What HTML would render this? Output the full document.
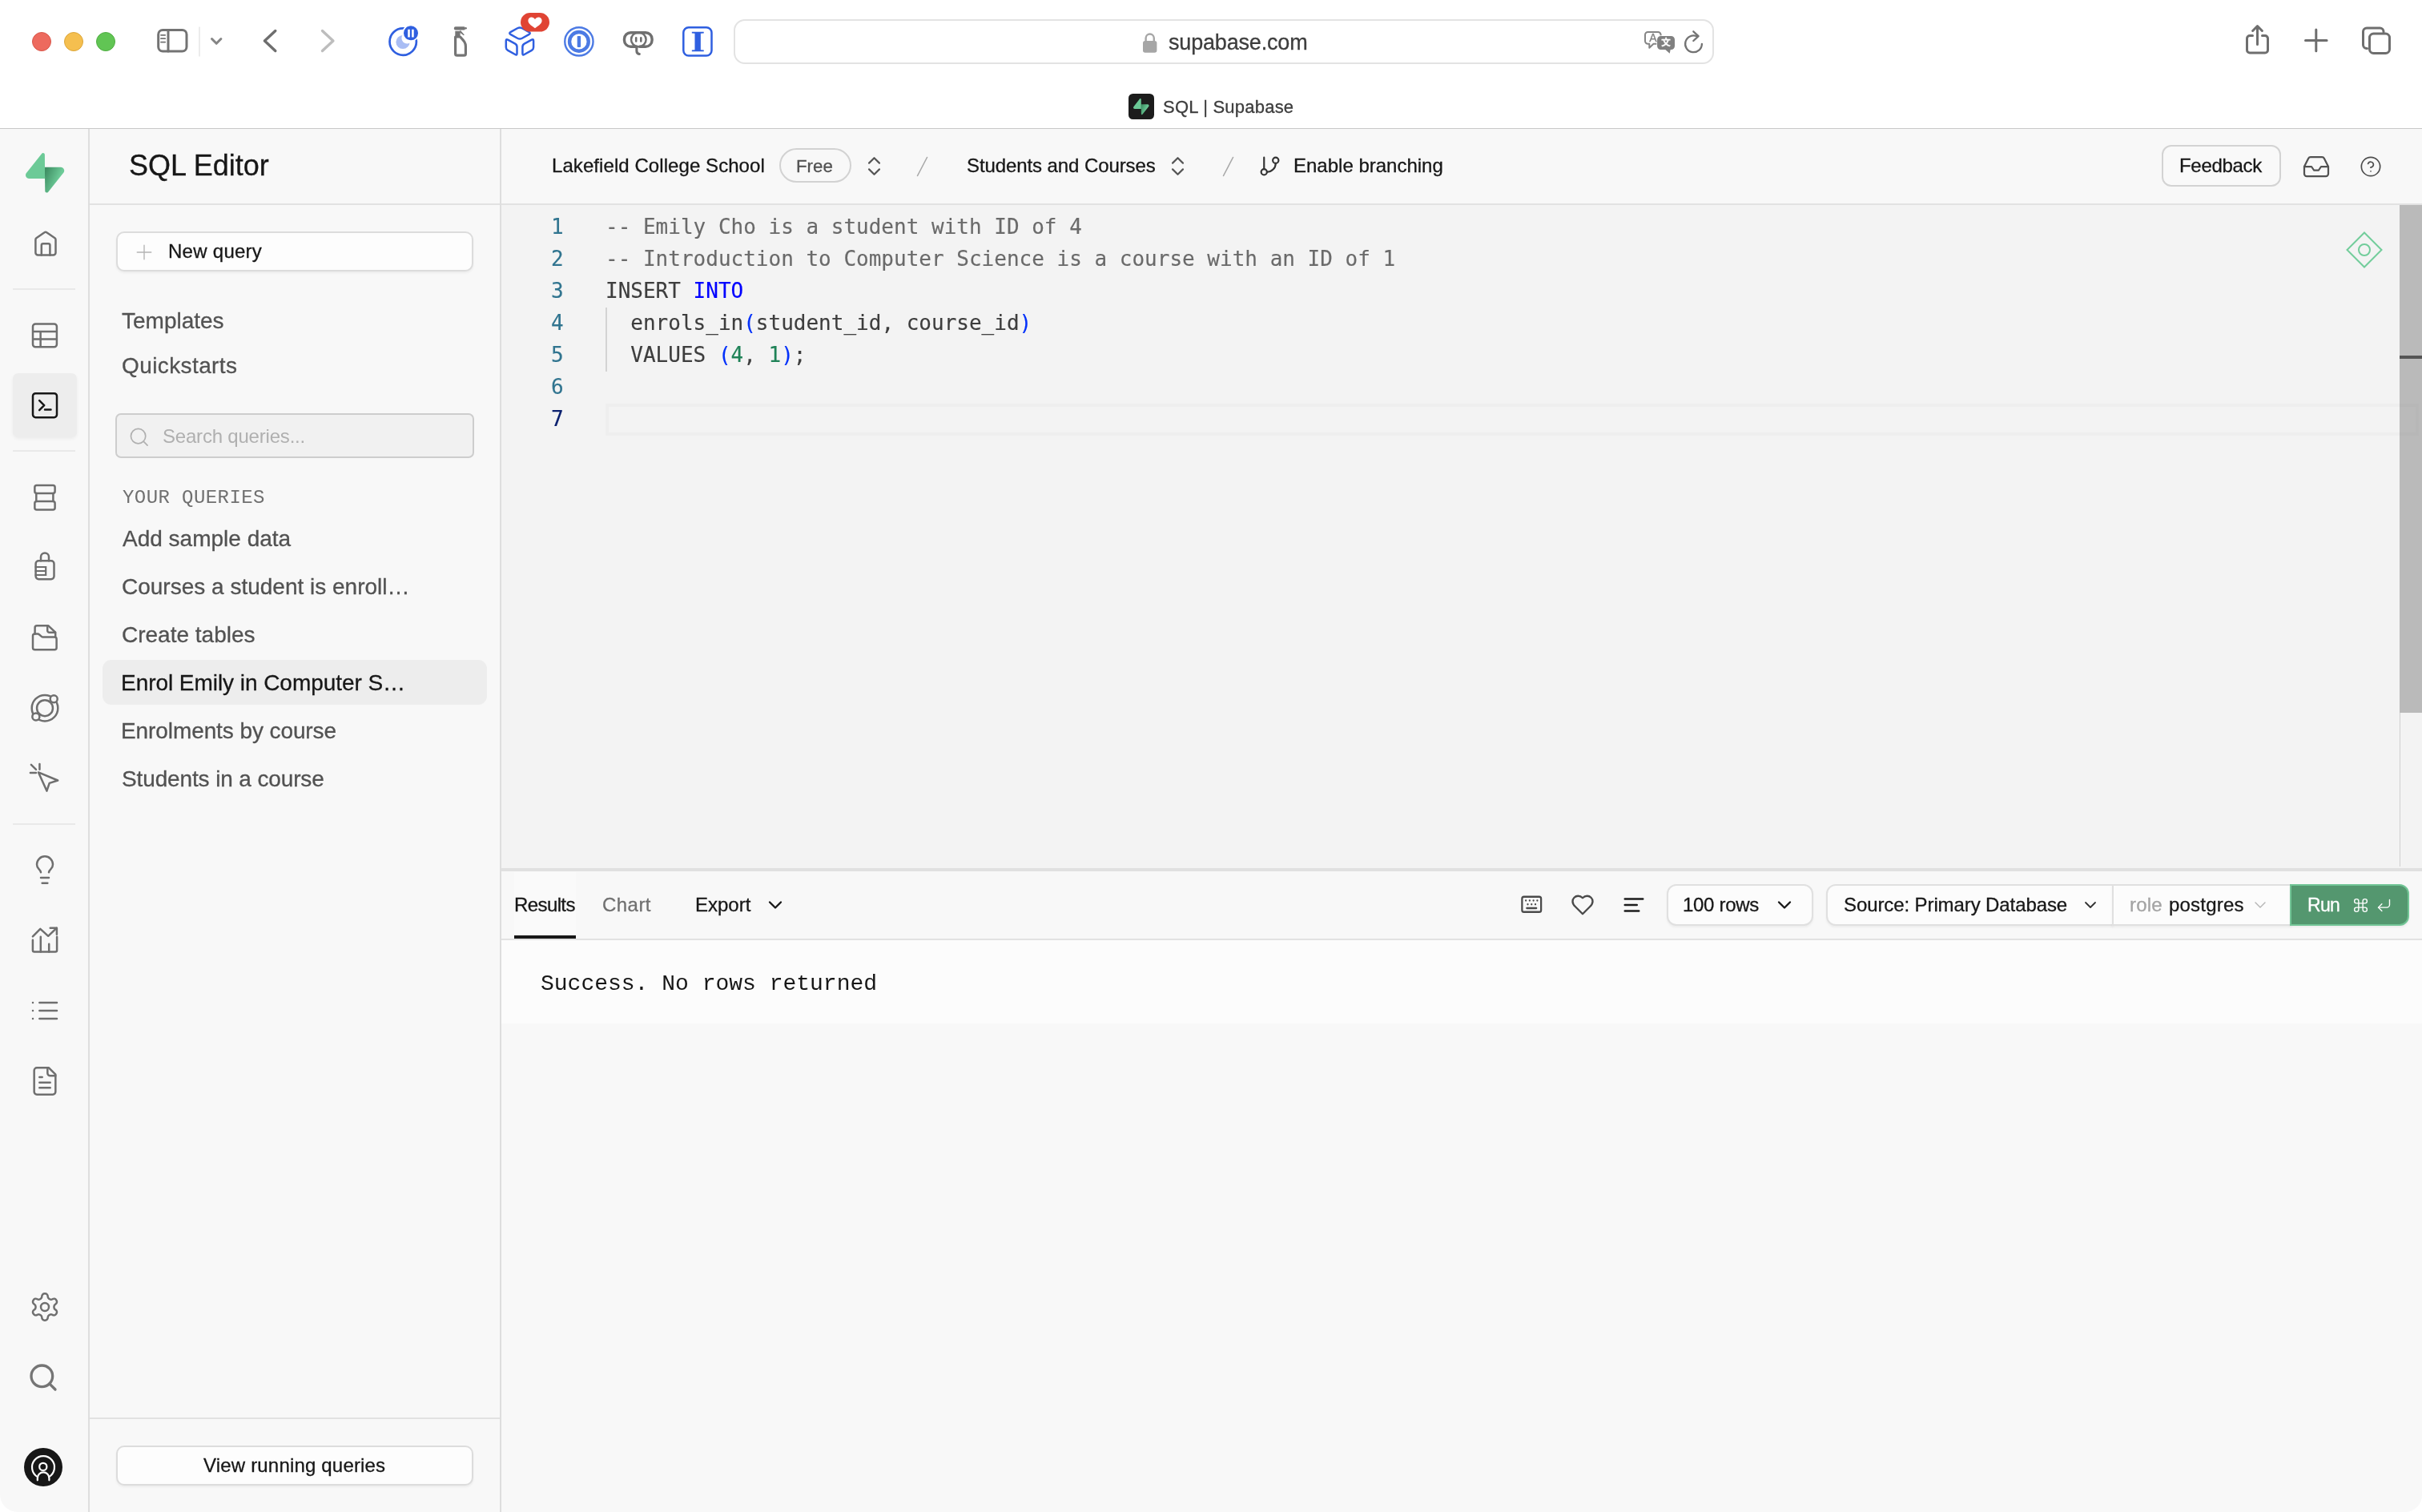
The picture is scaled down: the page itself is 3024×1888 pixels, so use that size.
<!DOCTYPE html>
<html lang="en">
<head>
<meta charset="utf-8">
<title>SQL | Supabase</title>
<style>
*{box-sizing:border-box;margin:0;padding:0}
html,body{width:3024px;height:1888px;overflow:hidden;background:#fff}
body{position:relative;font-family:"Liberation Sans",sans-serif;color:#171717}
.abs{position:absolute}
.t{position:absolute;white-space:pre;font-family:"Liberation Sans",sans-serif;will-change:transform}
.t{-webkit-text-stroke:.300px}
.mono{-webkit-text-stroke:.150px}
.lmono{-webkit-text-stroke:0}
.mono{font-family:"DejaVu Sans Mono","Liberation Mono",monospace}
.lmono{font-family:"Liberation Mono","DejaVu Sans Mono",monospace}
svg{position:absolute;overflow:visible}
</style>
</head>
<body>
<!-- ===== BROWSER CHROME ===== -->
<div class="abs" style="left:0px;top:0px;width:3024px;height:160px;background:#fff"></div>
<div class="abs" style="left:0px;top:160px;width:3024px;height:1px;background:#c8c8c8"></div>
<div class="abs" style="left:40px;top:40px;width:24px;height:24px;border-radius:50%;background:#ed6a5e;border:1px solid #d9574b"></div>
<div class="abs" style="left:80px;top:40px;width:24px;height:24px;border-radius:50%;background:#f5bf4f;border:1px solid #dca63a"></div>
<div class="abs" style="left:120px;top:40px;width:24px;height:24px;border-radius:50%;background:#61c554;border:1px solid #4fae42"></div>
<svg style="left:0;top:0" width="3024" height="160" viewBox="0 0 3024 160" fill="none" stroke-linecap="round" stroke-linejoin="round">
<g stroke="#737373" stroke-width="3"><rect x="197.7" y="37.5" width="35.3" height="26.6" rx="5.5"/><path d="M210 37.5v26.6"/></g>
<g stroke="#737373" stroke-width="1.8"><path d="M201 43.8h5.2M201 48.2h5.2M201 52.6h5.2"/></g>
<path d="M249 34v36" stroke="#e6e6e6" stroke-width="1.5"/>
<path d="M264.5 48.5l5.7 5.8 5.7-5.8" stroke="#858585" stroke-width="3"/>
<path d="M343.8 38.5L330.4 51l13.4 12.5" stroke="#6e6e6e" stroke-width="3.4"/>
<path d="M402.5 38.5L415.9 51l-13.4 12.5" stroke="#bdbdbd" stroke-width="3.4"/>
<circle cx="503.200" cy="52.100" r="16.700" stroke="#2f5fe0" stroke-width="2.700"/>
<circle cx="503" cy="52.500" r="8.600" fill="#a9bdf4" stroke="none"/><circle cx="508.300" cy="47.700" r="6.900" fill="#fff" stroke="none"/>
<circle cx="513" cy="41.300" r="10.700" fill="#fff" stroke="none"/><circle cx="513" cy="41.300" r="9" fill="#2f5fe0" stroke="none"/>
<path d="M510.500 36.800v9.800M515.400 36.800v9.800" stroke="#fff" stroke-width="2.600" stroke-linecap="butt"/>
<g fill="#757575" stroke="none"><path d="M568.800 33.200h10.500a1.500 1.500 0 0 1 1.500 1.500v1.400a1.500 1.500 0 0 1-1.500 1.500h-10.500a2 2 0 0 1-2-2v-.400a2 2 0 0 1 2-2z"/><circle cx="581.600" cy="35.200" r="1.300"/><rect x="568.300" y="38.800" width="6.300" height="7.400"/><path d="M574.600 37.600l5.200 5.800-.900.800-5-3.600z"/></g>
<path d="M568.600 46v21.200a2 2 0 0 0 2 2h8.800a2 2 0 0 0 2-2v-9.400c0-4.600-2.200-6.800-6.800-11.800z" stroke="#757575" stroke-width="3.200"/>
<g stroke="#2f5fe0" stroke-width="2.500"><path d="M646.03 35.25Q649.00 33.60 651.97 35.25L660.23 39.85Q663.20 41.50 660.23 43.15L651.97 47.75Q649.00 49.40 646.03 47.75L637.77 43.15Q634.80 41.50 637.77 39.85Z"/><path d="M631.80 50.90Q631.80 48.30 634.08 49.55L643.22 54.55Q645.50 55.80 645.50 58.40L645.50 66.70Q645.50 69.30 643.24 68.01L634.06 62.79Q631.80 61.50 631.80 58.90Z"/><path d="M652.40 58.40Q652.40 55.80 654.68 54.55L663.82 49.55Q666.10 48.30 666.10 50.90L666.10 58.90Q666.10 61.50 663.84 62.79L654.66 68.01Q652.40 69.30 652.40 66.70Z"/></g>
<rect x="650" y="16" width="36" height="23.6" rx="11.8" fill="#e04434" stroke="none"/>
<path d="M668 35.2c-5.6-3.6-8.6-6.3-8.6-9.4 0-2.5 1.9-4.2 4.2-4.2 1.8 0 3.4 1 4.4 2.6 1-1.6 2.6-2.6 4.4-2.6 2.300 0 4.200 1.700 4.200 4.200 0 3.100-3 5.800-8.600 9.400z" fill="#fff" stroke="none"/>
<circle cx="722.900" cy="51.900" r="17.650" stroke="#4c7ae4" stroke-width="2.400"/><circle cx="722.900" cy="51.900" r="11.850" stroke="#4c7ae4" stroke-width="4.400"/>
<rect x="720.700" y="44.900" width="4.400" height="14" rx=".800" fill="#4c7ae4" stroke="none"/>
<g stroke="#6f6f6f" stroke-width="3.400"><path d="M794.900 58.200h-7.400a8 8 0 0 1-8-8v-1.500a8 8 0 0 1 8-8h18.600a8 8 0 0 1 8 8v1.500a8 8 0 0 1-8 8h-7.400"/><ellipse cx="797.300" cy="49.450" rx="9.300" ry="8.900" stroke-width="2.500"/><path d="M794.900 58.200v5.200a4.200 4.200 0 0 0 3.400 4.100" stroke-width="3.100"/></g>
<path d="M794.200 47.300v4.200M800.300 47.300v4.200" stroke="#6f6f6f" stroke-width="2.600"/>
<rect x="853.300" y="34.300" width="35.200" height="35.200" rx="6.500" stroke="#2f5fe0" stroke-width="2.500"/>
<rect x="1427" y="51" width="17.400" height="14.800" rx="2.800" fill="#a6a6a6" stroke="none"/><path d="M1430.600 52v-4.400a5.100 5.100 0 0 1 10.200 0V52" stroke="#a6a6a6" stroke-width="2.400"/>
<path d="M2057.500 40h12.600a3.500 3.500 0 0 1 3.500 3.500v7.700a3.500 3.500 0 0 1-3.500 3.500h-5.600l-5.200 5v-5h-1.800a3.500 3.500 0 0 1-3.500-3.500v-7.700a3.500 3.500 0 0 1 3.500-3.500z" stroke="#858585" stroke-width="2" fill="#fff"/>
<path d="M2073.600 45h12.900a4.500 4.500 0 0 1 4.500 4.500v8.100a4.500 4.500 0 0 1-4.500 4.500h-.800l-1 4.700-5.400-4.700h-5.700a4.500 4.500 0 0 1-4.500-4.500v-8.100a4.500 4.500 0 0 1 4.500-4.500z" fill="#808080" stroke="#fff" stroke-width="1.500" paint-order="stroke"/>
<path d="M2124.900 54.800a10.400 10.400 0 1 1-6.300-9.550" stroke="#737373" stroke-width="2.300"/><path d="M2114.300 39.300l6.300 5.800-6.300 5.900" stroke="#737373" stroke-width="2.300"/>
<g stroke="#6e6e6e" stroke-width="3"><path d="M2812.500 44.600h-3.500a3.500 3.500 0 0 0-3.500 3.500v14.400a3.500 3.500 0 0 0 3.500 3.500h19a3.500 3.500 0 0 0 3.500-3.500v-14.400a3.500 3.500 0 0 0-3.500-3.500h-3.500"/><path d="M2818.500 55.500v-22.500M2812.600 38.500l5.900-5.900 5.900 5.900"/></g>
<path d="M2878.500 50.400h26.600M2891.800 37.100v26.600" stroke="#6e6e6e" stroke-width="3"/>
<g stroke="#6e6e6e" stroke-width="3"><rect x="2958.500" y="42" width="25" height="24.500" rx="5"/><path d="M2955.500 60.500h-.500a4.500 4.500 0 0 1-4.500-4.500v-16.500a4.500 4.500 0 0 1 4.500-4.500h16.500a4.500 4.500 0 0 1 4.500 4.500v.500" /></g>
</svg>
<div class="t" style="left:853.6px;top:33px;width:34.600px;text-align:center;font-family:'Liberation Serif',serif;font-weight:bold;font-size:36px;line-height:38px;color:#2f5fe0;transform:scaleX(1.250)">I</div>
<div class="t" style="left:2054.800px;top:40.400px;width:18px;text-align:center;font-size:14px;line-height:14px;color:#808080">A</div>
<div class="t" style="left:2070.900px;top:47.300px;width:18px;text-align:center;font-family:'Liberation Sans','Noto Sans CJK SC',sans-serif;font-size:11.500px;line-height:13px;color:#fff;font-weight:bold">文</div>
<div class="abs" style="left:916px;top:24px;width:1224px;height:56px;border:2px solid #e3e3e3;border-radius:14px"></div>
<div class="t" style="left:1459.3px;top:40.0px;font-size:27px;line-height:27px;color:#3d3d3d;letter-spacing:-0.18px;">supabase.com</div>
<div class="abs" style="left:1409px;top:117px;width:32px;height:32px;background:#1c1c1c;border-radius:5.500px"></div>
<svg style="left:1415.200px;top:122.700px" width="19.600" height="20.300" viewBox="0 0 109 113"><defs><linearGradient id="fg" x1="53.974" y1="54.974" x2="94.164" y2="71.830" gradientUnits="userSpaceOnUse"><stop stop-color="#3d8f63"/><stop offset="1" stop-color="#6bc996"/></linearGradient></defs><path d="M63.7076 110.284C60.8481 113.885 55.0502 111.912 54.9813 107.314L53.9738 40.0627L99.1935 40.0627C107.384 40.0627 111.952 49.5228 106.859 55.9374L63.7076 110.284Z" fill="url(#fg)"/><path d="M45.317 2.07103C48.1765 -1.53037 53.9745 0.442937 54.0434 5.041L54.4849 72.2922H9.83113C1.64038 72.2922 -2.92775 62.8321 2.1655 56.4175L45.317 2.07103Z" fill="#6bc996"/></svg>
<div class="t" style="left:1451.8px;top:123.0px;font-size:22px;line-height:22px;color:#3d3d3d;letter-spacing:0.22px;">SQL | Supabase</div>
<!-- ===== NAV RAIL ===== -->
<div class="abs" style="left:0px;top:161px;width:112px;height:1727px;background:#f8f8f8;border-bottom-left-radius:22px"></div>
<div class="abs" style="left:110px;top:161px;width:2px;height:1727px;background:#dedede"></div>
<svg style="left:31.900px;top:190.600px" width="48.200" height="50" viewBox="0 0 109 113"><defs><linearGradient id="lg" x1="53.974" y1="54.974" x2="94.164" y2="71.830" gradientUnits="userSpaceOnUse"><stop stop-color="#3e8e63"/><stop offset="1" stop-color="#6cca97"/></linearGradient></defs><path d="M63.7076 110.284C60.8481 113.885 55.0502 111.912 54.9813 107.314L53.9738 40.0627L99.1935 40.0627C107.384 40.0627 111.952 49.5228 106.859 55.9374L63.7076 110.284Z" fill="url(#lg)"/><path d="M45.317 2.07103C48.1765 -1.53037 53.9745 0.442937 54.0434 5.041L54.4849 72.2922H9.83113C1.64038 72.2922 -2.92775 62.8321 2.1655 56.4175L45.317 2.07103Z" fill="#6cca97"/></svg>
<div class="abs" style="left:16px;top:359.6px;width:78px;height:2px;background:#e9e9e9"></div>
<div class="abs" style="left:16px;top:562px;width:78px;height:2px;background:#e9e9e9"></div>
<div class="abs" style="left:16px;top:1027.8px;width:78px;height:2px;background:#e9e9e9"></div>
<div class="abs" style="left:16px;top:466.3px;width:80px;height:80px;background:#ededed;border-radius:7px;box-shadow:0 2px 4px rgba(0,0,0,.050)"></div>
<svg style="left:0;top:0" width="112" height="1888" viewBox="0 0 112 1888" fill="none" stroke="#6f6f6f" stroke-width="2.500" stroke-linecap="round" stroke-linejoin="round">
<path d="M44.400 299.300a2.500 2.500 0 0 1 1-2L55.500 290.300a2.300 2.300 0 0 1 2.800 0L68.500 297.300a2.500 2.500 0 0 1 1 2V315.600a3 3 0 0 1-3 3H47.400a3 3 0 0 1-3-3Z"/><path d="M51.800 318.600V306.300a2 2 0 0 1 2-2h6.600a2 2 0 0 1 2 2V318.600"/>
<rect x="43.350" y="606.100" width="25.250" height="9.900" rx="2.500"/><rect x="43.350" y="626.100" width="25.250" height="10.300" rx="2.500"/><path d="M45.300 616v10.100M66.400 616v10.100"/>
<rect x="44.600" y="700.300" width="22.900" height="22.900" rx="3.600"/><path d="M51 700.300v-4.900a5 5 0 0 1 10 0v4.900"/><path d="M44.600 708H57.200V718H44.600M44.600 713H56.500" stroke-width="2.200" stroke-linejoin="miter"/>
<path d="M43.600 791.600V783.700a2.500 2.500 0 0 1 2.500-2.500H60.200L69.200 789.600V795.600"/><path d="M59.200 781.400V787.300a2.500 2.500 0 0 0 2.500 2.500H69"/><path d="M41 794.100a2.500 2.500 0 0 1 2.500-2.500H47.200a2.500 2.500 0 0 1 1.700.700L52.200 795.100a2 2 0 0 0 1.400.500H68.100a2.500 2.500 0 0 1 2.500 2.500V808.700a2.500 2.500 0 0 1-2.500 2.500H43.500a2.500 2.500 0 0 1-2.500-2.500Z"/>
<circle cx="56" cy="884.200" r="16.300"/><circle cx="56" cy="884.200" r="9.950"/><circle cx="67.200" cy="872.700" r="4.500" fill="#f8f8f8"/><circle cx="44.850" cy="894.900" r="4.500" fill="#f8f8f8"/>
<path d="M48 964.400L72.200 974.500 61.700 977.900 58.400 987.600Z"/><path d="M38.900 954.900L45 960.800M49.450 954V960.800M37.900 965H45"/>
<path d="M40.900 1173.700V1186.600a2 2 0 0 0 2 2H69.100a2 2 0 0 0 2-2V1169.800"/><path d="M50.800 1169.800V1188.600M61.200 1178.700V1188.600"/><path d="M40.900 1169.300L50.300 1159.800 60.200 1168.800 70.600 1158.800"/><path d="M62.700 1158.800H70.900V1166.800"/>
</svg>
<svg style="left:36px;top:398px" width="40" height="40" viewBox="0 0 24 24" fill="none" stroke="#6f6f6f" stroke-width="1.5" stroke-linecap="round" stroke-linejoin="round" ><path d="M2.9707 15.3494L20.9707 15.355M20.9405 9.61588H2.99699M8.77661 9.61588V21.1367M20.9405 5.85547V19.1367C20.9405 20.2413 20.0451 21.1367 18.9405 21.1367H4.99699C3.89242 21.1367 2.99699 20.2413 2.99699 19.1367V5.85547C2.99699 4.7509 3.89242 3.85547 4.99699 3.85547H18.9405C20.0451 3.85547 20.9405 4.7509 20.9405 5.85547Z"/></svg>
<svg style="left:36px;top:486.2px" width="40" height="40" viewBox="0 0 24 24" fill="none" stroke="#171717" stroke-width="1.5" stroke-linecap="round" stroke-linejoin="round" ><path d="M7.89844 8.4342L11.5004 12.0356L7.89844 15.6375M12 15.3292H16.5M5 21.1055H19C20.1046 21.1055 21 20.21 21 19.1055V5.10547C21 4.0009 20.1046 3.10547 19 3.10547H5C3.89543 3.10547 3 4.0009 3 5.10547V19.1055C3 20.21 3.89543 21.1055 5 21.1055Z"/></svg>
<svg style="left:36px;top:1066px" width="40" height="40" viewBox="0 0 24 24" fill="none" stroke="#6f6f6f" stroke-width="1.5" stroke-linecap="round" stroke-linejoin="round" ><path d="M15 14c.2-1 .7-1.7 1.5-2.5 1-.9 1.5-2.2 1.5-3.5A6 6 0 0 0 6 8c0 1 .2 2.2 1.5 3.5.7.7 1.3 1.5 1.5 2.5"/><path d="M9 18h6"/><path d="M10 22h4"/></svg>
<svg style="left:36px;top:1242px" width="40" height="40" viewBox="0 0 24 24" fill="none" stroke="#6f6f6f" stroke-width="1.5" stroke-linecap="round" stroke-linejoin="round" ><path d="M8 6h13M8 12h13M8 18h13M3 6h.01M3 12h.01M3 18h.01"/></svg>
<svg style="left:36px;top:1329.7px" width="40" height="40" viewBox="0 0 24 24" fill="none" stroke="#6f6f6f" stroke-width="1.5" stroke-linecap="round" stroke-linejoin="round" ><path d="M15 2H6a2 2 0 0 0-2 2v16a2 2 0 0 0 2 2h12a2 2 0 0 0 2-2V7Z"/><path d="M14 2v4a2 2 0 0 0 2 2h4"/><path d="M10 9H8"/><path d="M16 13H8"/><path d="M16 17H8"/></svg>
<svg style="left:36px;top:1612px" width="40" height="40" viewBox="0 0 24 24" fill="none" stroke="#6f6f6f" stroke-width="1.5" stroke-linecap="round" stroke-linejoin="round" ><path d="M12.22 2h-.44a2 2 0 0 0-2 2v.18a2 2 0 0 1-1 1.73l-.43.25a2 2 0 0 1-2 0l-.15-.08a2 2 0 0 0-2.73.73l-.22.38a2 2 0 0 0 .73 2.73l.15.1a2 2 0 0 1 1 1.72v.51a2 2 0 0 1-1 1.74l-.15.09a2 2 0 0 0-.73 2.73l.22.38a2 2 0 0 0 2.73.73l.15-.08a2 2 0 0 1 2 0l.43.25a2 2 0 0 1 1 1.73V20a2 2 0 0 0 2 2h.44a2 2 0 0 0 2-2v-.18a2 2 0 0 1 1-1.73l.43-.25a2 2 0 0 1 2 0l.15.08a2 2 0 0 0 2.73-.73l.22-.39a2 2 0 0 0-.73-2.73l-.15-.08a2 2 0 0 1-1-1.74v-.5a2 2 0 0 1 1-1.74l.15-.09a2 2 0 0 0 .73-2.73l-.22-.38a2 2 0 0 0-2.73-.73l-.15.08a2 2 0 0 1-2 0l-.43-.25a2 2 0 0 1-1-1.73V4a2 2 0 0 0-2-2z"/><circle cx="12" cy="12" r="3"/></svg>
<svg style="left:34px;top:1700px" width="40" height="40" viewBox="0 0 24 24" fill="none" stroke="#757575" stroke-width="2" stroke-linecap="round" stroke-linejoin="round" ><circle cx="11" cy="11" r="8"/><path d="m21 21-4.3-4.3"/></svg>
<div class="abs" style="left:30px;top:1807.6px;width:48px;height:48px;border-radius:50%;background:#171717"></div>
<svg style="left:0;top:0" width="112" height="1888" viewBox="0 0 112 1888" fill="none" stroke="#fff" stroke-width="2.200" stroke-linecap="round"><path d="M46.800 1844.100A14 14 0 1 1 61.200 1844.100"/><circle cx="53.800" cy="1831.400" r="4.600"/><path d="M46.800 1848.300V1845.700a7.300 7.300 0 0 1 14.600 0V1848.300"/></svg>
<!-- ===== SQL EDITOR SIDE PANEL ===== -->
<div class="abs" style="left:112px;top:161px;width:512px;height:1727px;background:#f8f8f8"></div>
<div class="abs" style="left:624px;top:161px;width:2px;height:1727px;background:#dedede"></div>
<div class="abs" style="left:112px;top:254px;width:512px;height:2px;background:#e2e2e2"></div>
<div class="t" style="left:160.5px;top:189.0px;font-size:36px;line-height:36px;color:#171717;">SQL Editor</div>
<div class="abs" style="left:144.8px;top:288.7px;width:446.2px;height:50px;background:#fdfdfd;border:2px solid #dcdcdc;border-radius:10px;box-shadow:0 2px 3px rgba(0,0,0,.05)"></div>
<svg style="left:165px;top:299.6px" width="30" height="30" viewBox="0 0 24 24" fill="none" stroke="#b4b4b4" stroke-width="1.1" stroke-linecap="round" stroke-linejoin="round" ><path d="M5 12h14M12 5v14"/></svg>
<div class="t" style="left:210.0px;top:302.0px;font-size:24px;line-height:24px;color:#171717;letter-spacing:0.27px;">New query</div>
<div class="t" style="left:152.0px;top:387.0px;font-size:28px;line-height:28px;color:#525252;">Templates</div>
<div class="t" style="left:152.0px;top:443.0px;font-size:28px;line-height:28px;color:#525252;letter-spacing:0.4px;">Quickstarts</div>
<div class="abs" style="left:144.2px;top:516px;width:448px;height:56px;background:#f1f1f1;border:2px solid #cdcdcd;border-radius:7px"></div>
<svg style="left:159.6px;top:531.8px" width="27.5" height="27.5" viewBox="0 0 24 24" fill="none" stroke="#b0b0b0" stroke-width="1.5" stroke-linecap="round" stroke-linejoin="round" ><circle cx="11" cy="11" r="8"/><path d="m21 21-4.300-4.300"/></svg>
<div class="t" style="left:202.5px;top:533.0px;font-size:24px;line-height:24px;color:#b0b0b0;letter-spacing:-0.2px;-webkit-text-stroke:0;">Search queries...</div>
<div class="t lmono" style="left:153.0px;top:610.0px;font-size:24px;line-height:24px;color:#707070;letter-spacing:0.42px;">YOUR QUERIES</div>
<div class="abs" style="left:128px;top:823.7px;width:480px;height:56px;background:#ededed;border-radius:11px"></div>
<div class="t" style="left:153.0px;top:659.0px;font-size:28px;line-height:28px;color:#525252;">Add sample data</div>
<div class="t" style="left:151.7px;top:719.0px;font-size:28px;line-height:28px;color:#525252;">Courses a student is enroll…</div>
<div class="t" style="left:151.7px;top:779.0px;font-size:28px;line-height:28px;color:#525252;">Create tables</div>
<div class="t" style="left:151.0px;top:839.0px;font-size:28px;line-height:28px;color:#171717;letter-spacing:-0.05px;">Enrol Emily in Computer S…</div>
<div class="t" style="left:151.0px;top:899.0px;font-size:28px;line-height:28px;color:#525252;letter-spacing:-0.09px;">Enrolments by course</div>
<div class="t" style="left:151.7px;top:959.0px;font-size:28px;line-height:28px;color:#525252;letter-spacing:-0.13px;">Students in a course</div>
<div class="abs" style="left:112px;top:1769.5px;width:512px;height:2px;background:#e2e2e2"></div>
<div class="abs" style="left:144.8px;top:1804.7px;width:446.2px;height:50px;background:#fdfdfd;border:2px solid #dcdcdc;border-radius:10px;box-shadow:0 2px 3px rgba(0,0,0,.05)"></div>
<div class="t" style="left:254.0px;top:1818.0px;font-size:24px;line-height:24px;color:#171717;letter-spacing:0.18px;">View running queries</div>
<!-- ===== MAIN ===== -->
<div class="abs" style="left:626px;top:161px;width:2398px;height:1727px;background:#f8f8f8;border-bottom-right-radius:21px"></div>
<div class="abs" style="left:626px;top:254px;width:2398px;height:2px;background:#e2e2e2"></div>
<div class="t" style="left:688.5px;top:195.0px;font-size:24px;line-height:24px;color:#171717;letter-spacing:0.07px;">Lakefield College School</div>
<div class="abs" style="left:972.5px;top:185.4px;width:90px;height:42.6px;border:2px solid #d2d2d2;border-radius:22px;background:#f8f8f8"></div>
<div class="t" style="left:994.0px;top:197.0px;font-size:22.3px;line-height:22.3px;color:#525252;">Free</div>
<svg style="left:1075.7px;top:191.5px" width="31" height="31" viewBox="0 0 24 24" fill="none" stroke="#555" stroke-width="1.7" stroke-linecap="round" stroke-linejoin="round" ><path d="m7 15 5 5 5-5"/><path d="m7 9 5-5 5 5"/></svg>
<div class="t" style="left:1206.5px;top:195.0px;font-size:24px;line-height:24px;color:#171717;letter-spacing:-0.09px;">Students and Courses</div>
<svg style="left:1455.3px;top:191.5px" width="31" height="31" viewBox="0 0 24 24" fill="none" stroke="#555" stroke-width="1.7" stroke-linecap="round" stroke-linejoin="round" ><path d="m7 15 5 5 5-5"/><path d="m7 9 5-5 5 5"/></svg>
<svg style="left:0;top:0" width="3024" height="260" viewBox="0 0 3024 260" fill="none" stroke="#a9a9a9" stroke-width="1.600" stroke-linecap="round"><path d="M1157.500 196.500L1145.500 219.500M1539.500 196.500L1527.500 219.500"/></svg>
<svg style="left:1571.4px;top:193px" width="29" height="29" viewBox="0 0 24 24" fill="none" stroke="#333" stroke-width="1.8" stroke-linecap="round" stroke-linejoin="round" ><path d="M6 3v12"/><circle cx="18" cy="6" r="3"/><circle cx="6" cy="18" r="3"/><path d="M18 9a9 9 0 0 1-9 9"/></svg>
<div class="t" style="left:1615.0px;top:195.0px;font-size:24px;line-height:24px;color:#171717;">Enable branching</div>
<div class="abs" style="left:2699px;top:181px;width:149px;height:52px;border:2px solid #d3d3d3;border-radius:12px;background:#f9f9f9"></div>
<div class="t" style="left:2721.0px;top:195.0px;font-size:24px;line-height:24px;color:#171717;letter-spacing:-0.3px;">Feedback</div>
<svg style="left:2873.9px;top:190.1px" width="36" height="36" viewBox="0 0 24 24" fill="none" stroke="#525252" stroke-width="1.5" stroke-linecap="round" stroke-linejoin="round" ><path d="M22 12h-6l-2 3h-4l-2-3H2"/><path d="M5.450 5.110 2 12v6a2 2 0 0 0 2 2h16a2 2 0 0 0 2-2v-6l-3.450-6.890A2 2 0 0 0 16.760 4H7.240a2 2 0 0 0-1.790 1.110z"/></svg>
<svg style="left:2946px;top:194px" width="28" height="28" viewBox="0 0 24 24" fill="none" stroke="#4d4d4d" stroke-width="1.45" stroke-linecap="round" stroke-linejoin="round" ><circle cx="12" cy="12" r="10"/><path d="M9.090 9a3 3 0 0 1 5.830 1c0 2-3 3-3 3"/><path d="M12 17h.010"/></svg>
<div class="abs" style="left:626px;top:256px;width:2398px;height:828px;background:#f3f3f3"></div>
<div class="abs" style="left:756px;top:504px;width:2264px;height:40px;border:4px solid #eeeeee"></div>
<div class="abs" style="left:2996px;top:256px;width:28px;height:634px;background:rgba(100,100,100,.400)"></div>
<div class="abs" style="left:2996px;top:444px;width:28px;height:4px;background:#555"></div>
<div class="abs" style="left:2996px;top:890px;width:1px;height:192px;background:#cfcfcf"></div>
<div class="abs" style="left:756px;top:384px;width:2px;height:80px;background:#d3d3d3"></div>
<div class="t mono" style="right:2320.5px;top:270.0px;font-size:26px;line-height:26px;color:#30748f;">1</div>
<div class="t mono" style="left:755.6px;top:270.0px;font-size:26px;line-height:26px;color:#3d3d3d;"><span style="color:#6a6a6a">-- Emily Cho is a student with ID of 4</span></div>
<div class="t mono" style="right:2320.5px;top:310.0px;font-size:26px;line-height:26px;color:#30748f;">2</div>
<div class="t mono" style="left:755.6px;top:310.0px;font-size:26px;line-height:26px;color:#3d3d3d;"><span style="color:#6a6a6a">-- Introduction to Computer Science is a course with an ID of 1</span></div>
<div class="t mono" style="right:2320.5px;top:350.0px;font-size:26px;line-height:26px;color:#30748f;">3</div>
<div class="t mono" style="left:755.6px;top:350.0px;font-size:26px;line-height:26px;color:#3d3d3d;">INSERT <span style="color:#0000ff">INTO</span></div>
<div class="t mono" style="right:2320.5px;top:390.0px;font-size:26px;line-height:26px;color:#30748f;">4</div>
<div class="t mono" style="left:755.6px;top:390.0px;font-size:26px;line-height:26px;color:#3d3d3d;">  enrols_in<span style="color:#0431fa">(</span>student_id, course_id<span style="color:#0431fa">)</span></div>
<div class="t mono" style="right:2320.5px;top:430.0px;font-size:26px;line-height:26px;color:#30748f;">5</div>
<div class="t mono" style="left:755.6px;top:430.0px;font-size:26px;line-height:26px;color:#3d3d3d;">  VALUES <span style="color:#0431fa">(</span><span style="color:#1f8257">4</span>, <span style="color:#1f8257">1</span><span style="color:#0431fa">)</span>;</div>
<div class="t mono" style="right:2320.5px;top:470.0px;font-size:26px;line-height:26px;color:#30748f;">6</div>
<div class="t mono" style="right:2320.5px;top:510.0px;font-size:26px;line-height:26px;color:#0b216f;">7</div>
<svg style="left:2928px;top:288px" width="48" height="48" viewBox="0 0 48 48" fill="none" stroke="#72cd9b" stroke-width="2"><path d="M24 2.500L45.500 24 24 45.500 2.500 24Z" stroke-linejoin="miter"/><circle cx="24" cy="24" r="7"/></svg>
<div class="abs" style="left:626px;top:1084px;width:2398px;height:4px;background:#e0e0e0"></div>
<div class="abs" style="left:626px;top:1172px;width:2398px;height:2px;background:#e2e2e2"></div>
<div class="abs" style="left:642px;top:1089px;width:77px;height:83px;background:#fafafa"></div>
<div class="t" style="left:642.0px;top:1118.0px;font-size:24px;line-height:24px;color:#171717;letter-spacing:-0.6px;">Results</div>
<div class="abs" style="left:642px;top:1167.5px;width:77px;height:4.5px;background:#171717"></div>
<div class="t" style="left:751.5px;top:1118.0px;font-size:24px;line-height:24px;color:#707070;letter-spacing:0.45px;">Chart</div>
<div class="t" style="left:867.5px;top:1118.0px;font-size:24px;line-height:24px;color:#171717;">Export</div>
<svg style="left:953.6px;top:1116px" width="28" height="28" viewBox="0 0 24 24" fill="none" stroke="#171717" stroke-width="2" stroke-linecap="round" stroke-linejoin="round" ><path d="m6 9 6 6 6-6"/></svg>
<svg style="left:1897.7px;top:1115.4px" width="28.5" height="28.5" viewBox="0 0 24 24" fill="none" stroke="#4a4a4a" stroke-width="1.9" stroke-linecap="round" stroke-linejoin="round" ><rect width="20" height="16" x="2" y="4" rx="2"/><path d="M6 8h.001M10 8h.001M14 8h.001M18 8h.001M8 12h.001M12 12h.001M16 12h.001M7 16h10"/></svg>
<svg style="left:1961.1px;top:1115px" width="30" height="30" viewBox="0 0 24 24" fill="none" stroke="#4a4a4a" stroke-width="1.9" stroke-linecap="round" stroke-linejoin="round" ><path d="M19 14c1.490-1.460 3-3.210 3-5.500A5.500 5.500 0 0 0 16.500 3c-1.760 0-3 .500-4.500 2-1.500-1.500-2.740-2-4.500-2A5.500 5.500 0 0 0 2 8.500c0 2.300 1.500 4.050 3 5.500l7 7Z"/></svg>
<svg style="left:2024.5px;top:1114.75px" width="30" height="30" viewBox="0 0 24 24" fill="none" stroke="#1c1c1c" stroke-width="2" stroke-linecap="round" stroke-linejoin="round" ><path d="M21 6H3M15 12H3M17 18H3"/></svg>
<div class="abs" style="left:2080.5px;top:1104px;width:183px;height:51.5px;border:2px solid #e0e0e0;background:#fcfcfc;box-shadow:0 2px 3px rgba(0,0,0,.05);border-radius:12px"></div>
<div class="t" style="left:2101.0px;top:1118.0px;font-size:24px;line-height:24px;color:#171717;letter-spacing:-0.3px;">100 rows</div>
<svg style="left:2213.8px;top:1116px" width="28" height="28" viewBox="0 0 24 24" fill="none" stroke="#171717" stroke-width="2" stroke-linecap="round" stroke-linejoin="round" ><path d="m6 9 6 6 6-6"/></svg>
<div class="abs" style="left:2280.3px;top:1104px;width:358.5px;height:51.5px;border:2px solid #e0e0e0;background:#fcfcfc;box-shadow:0 2px 3px rgba(0,0,0,.05);border-radius:12px 0 0 12px"></div>
<div class="t" style="left:2301.5px;top:1118.0px;font-size:24px;line-height:24px;color:#171717;letter-spacing:-0.1px;">Source: Primary Database</div>
<svg style="left:2598.4px;top:1117.7px" width="24" height="24" viewBox="0 0 24 24" fill="none" stroke="#333" stroke-width="1.8" stroke-linecap="round" stroke-linejoin="round" ><path d="m6 9 6 6 6-6"/></svg>
<div class="abs" style="left:2636.8px;top:1104px;width:224px;height:51.5px;border:2px solid #e0e0e0;background:#fcfcfc;box-shadow:0 2px 3px rgba(0,0,0,.05)"></div>
<div class="t" style="left:2659.0px;top:1118.0px;font-size:24px;line-height:24px;color:#a3a3a3;letter-spacing:0.2px;">role</div>
<div class="t" style="left:2708.0px;top:1118.0px;font-size:24px;line-height:24px;color:#171717;letter-spacing:0.2px;">postgres</div>
<svg style="left:2809.8px;top:1117.8px" width="24" height="24" viewBox="0 0 24 24" fill="none" stroke="#b4b4b4" stroke-width="1.4" stroke-linecap="round" stroke-linejoin="round" ><path d="m6 9 6 6 6-6"/></svg>
<div class="abs" style="left:2859px;top:1104px;width:149px;height:51.7px;background:#54976f;border:2px solid #72c596;border-radius:0 12px 12px 0;box-shadow:0 2px 3px rgba(0,0,0,.05)"></div>
<div class="t" style="left:2881.0px;top:1119.0px;font-size:23px;line-height:23px;color:#fff;letter-spacing:-0.7px;">Run</div>
<svg style="left:2937.3px;top:1119.5px" width="21" height="21" viewBox="0 0 24 24" fill="none" stroke="#fff" stroke-width="1.6" stroke-linecap="round" stroke-linejoin="round" ><path d="M15 6v12a3 3 0 1 0 3-3H6a3 3 0 1 0 3 3V6a3 3 0 1 0-3 3h12a3 3 0 1 0-3-3"/></svg>
<svg style="left:2965.9px;top:1119.5px" width="21" height="21" viewBox="0 0 24 24" fill="none" stroke="#fff" stroke-width="1.6" stroke-linecap="round" stroke-linejoin="round" ><path d="M9 10l-5 5 5 5"/><path d="M20 4v7a4 4 0 0 1-4 4H4"/></svg>
<div class="abs" style="left:626px;top:1174px;width:2398px;height:103.5px;background:#fcfcfc"></div>
<div class="t lmono" style="left:675.0px;top:1215.0px;font-size:28px;line-height:28px;color:#171717;">Success. No rows returned</div>
</body>
</html>
